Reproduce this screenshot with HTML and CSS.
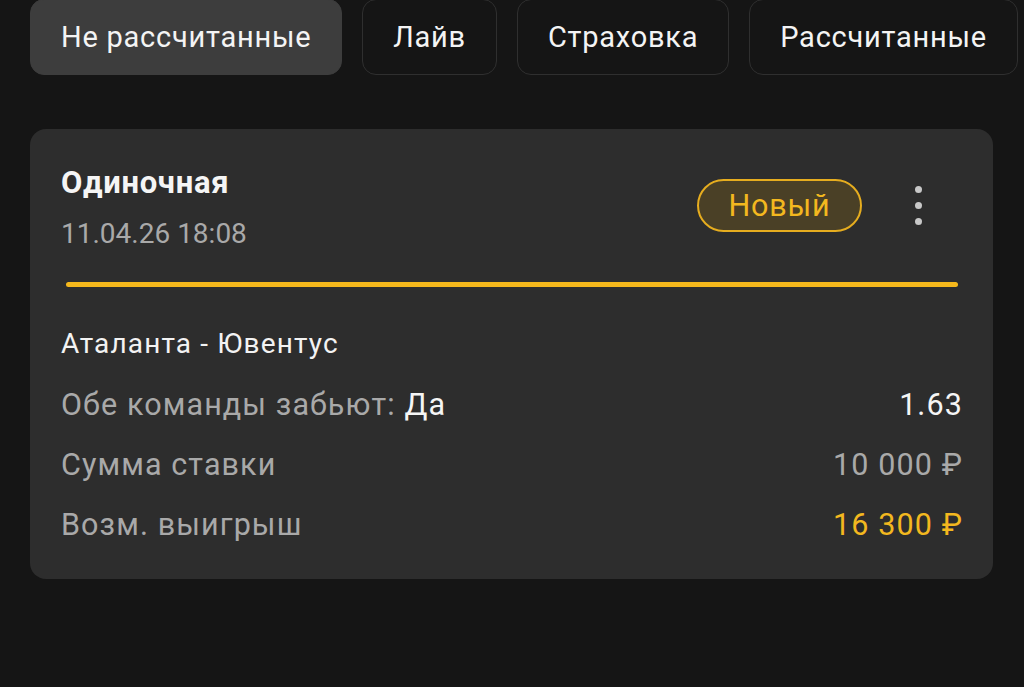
FILE: index.html
```html
<!DOCTYPE html>
<html lang="ru">
<head>
<meta charset="utf-8">
<title>Ставки</title>
<link rel="stylesheet" href="styles.css">
</head>
<body>
<nav class="tabs">
  <div class="tab tab-active">Не рассчитанные</div>
  <div class="tab">Лайв</div>
  <div class="tab">Страховка</div>
  <div class="tab">Рассчитанные</div>
</nav>
<section class="card">
  <div class="card-head">
    <div class="head-info">
      <div class="bet-type">Одиночная</div>
      <div class="bet-date">11.04.26 18:08</div>
    </div>
    <div class="head-actions">
      <span class="badge">Новый</span>
      <span class="more"><i></i><i></i><i></i></span>
    </div>
  </div>
  <div class="progress"></div>
  <div class="match">Аталанта - Ювентус</div>
  <div class="row">
    <span class="label">Обе команды забьют: <span class="pick">Да</span></span>
    <span class="value value-white">1.63</span>
  </div>
  <div class="row">
    <span class="label">Сумма ставки</span>
    <span class="value">10 000 ₽</span>
  </div>
  <div class="row">
    <span class="label">Возм. выигрыш</span>
    <span class="value value-yellow">16 300 ₽</span>
  </div>
</section>
</body>
</html>
```

FILE: styles.css
```css
* { box-sizing: border-box; }

html, body {
  margin: 0;
  padding: 0;
  background: #151515;
  height: 100%;
  overflow: hidden;
}

body {
  font-family: Roboto, "Noto Sans", "Liberation Sans", sans-serif;
  color: #f2f2f2;
}

.tabs {
  display: flex;
  gap: 20px;
  padding-left: 30px;
  margin-top: -1px;
}

.tab {
  height: 76px;
  display: flex;
  align-items: center;
  padding: 0 30px;
  font-size: 29px;
  letter-spacing: 0.75px;
  color: #f4f4f4;
  border: 1px solid #2f2f2f;
  border-radius: 14px;
  white-space: nowrap;
}

.tab-active {
  background: #3d3d3d;
  border-color: #3d3d3d;
}

.card {
  margin: 54px 31px 0 30px;
  background: #2d2d2d;
  border-radius: 16px;
  padding: 37px 31px 24px 31px;
}

.card-head {
  display: flex;
  align-items: center;
  justify-content: space-between;
}

.bet-type {
  font-size: 31px;
  font-weight: 700;
  letter-spacing: 0.7px;
  line-height: 34px;
  color: #f5f5f5;
}

.bet-date {
  margin-top: 17px;
  font-size: 28px;
  line-height: 34px;
  color: #a9a9a9;
}

.head-actions {
  display: flex;
  align-items: center;
  margin-bottom: 6px;
}

.badge {
  display: flex;
  align-items: center;
  justify-content: center;
  width: 165px;
  height: 53px;
  border: 2px solid #e6ad1f;
  border-radius: 27px;
  background: #4a4026;
  color: #f3b81f;
  font-size: 30.5px;
  letter-spacing: 0.8px;
}

.more {
  width: 40px;
  margin-left: 36px;
  margin-right: 24px;
  display: flex;
  flex-direction: column;
  align-items: center;
  gap: 9px;
}

.more i {
  display: block;
  width: 7px;
  height: 7px;
  border-radius: 50%;
  background: #c8c8c8;
}

.progress {
  margin: 31px 4px 0 5px;
  height: 5px;
  border-radius: 3px;
  background: #f5b81c;
}

.match {
  margin-top: 40px;
  font-size: 28px;
  letter-spacing: 1.15px;
  line-height: 34px;
  color: #f3f3f3;
}

.match + .row {
  margin-top: 14px;
}

.row {
  display: flex;
  justify-content: space-between;
  align-items: baseline;
  height: 60px;
  line-height: 60px;
  font-size: 30.5px;
  letter-spacing: 1.1px;
}

.label {
  color: #a9a9a9;
}

.pick {
  color: #f5f5f5;
}

.value {
  color: #a9a9a9;
  margin-right: -1px;
}

.value-white {
  color: #f5f5f5;
}

.value-yellow {
  color: #f3b81f;
}
```
